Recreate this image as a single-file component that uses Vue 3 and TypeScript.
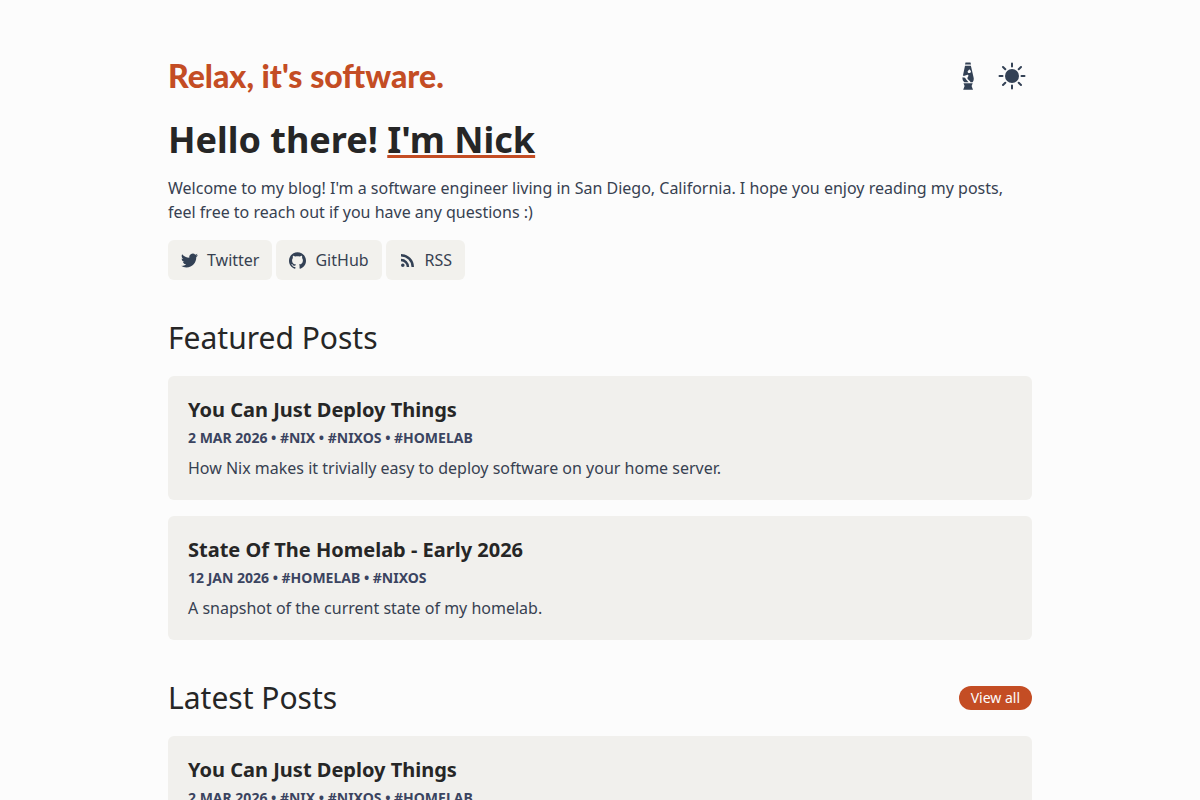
<script setup lang="ts">
interface Post {
  title: string
  date: string
  tags: string[]
  summary: string
}

const deploy: Post = {
  title: 'You Can Just Deploy Things',
  date: '2 Mar 2026',
  tags: ['#nix', '#nixos', '#homelab'],
  summary: 'How Nix makes it trivially easy to deploy software on your home server.',
}
const homelab: Post = {
  title: 'State Of The Homelab - Early 2026',
  date: '12 Jan 2026',
  tags: ['#homelab', '#nixos'],
  summary: 'A snapshot of the current state of my homelab.',
}

const sections: { heading: string; viewAll: boolean; posts: Post[] }[] = [
  { heading: 'Featured Posts', viewAll: false, posts: [deploy, homelab] },
  { heading: 'Latest Posts', viewAll: true, posts: [deploy] },
]

const meta = (post: Post) => [post.date, ...post.tags].join(' • ')

const links = [
  {
    label: 'Twitter',
    box: '0 0 24 24',
    path: 'M23.953 4.57a10 10 0 01-2.825.775 4.958 4.958 0 002.163-2.723c-.951.555-2.005.959-3.127 1.184a4.92 4.92 0 00-8.384 4.482C7.69 8.095 4.067 6.13 1.64 3.162a4.822 4.822 0 00-.666 2.475c0 1.71.87 3.213 2.188 4.096a4.904 4.904 0 01-2.228-.616v.06a4.923 4.923 0 003.946 4.827 4.996 4.996 0 01-2.212.085 4.936 4.936 0 004.604 3.417 9.867 9.867 0 01-6.102 2.105c-.39 0-.779-.023-1.17-.067a13.995 13.995 0 007.557 2.209c9.053 0 13.998-7.496 13.998-13.985 0-.21 0-.42-.015-.63A9.935 9.935 0 0024 4.59z',
  },
  {
    label: 'GitHub',
    box: '0 0 24 24',
    path: 'M12 .297c-6.63 0-12 5.373-12 12 0 5.303 3.438 9.8 8.205 11.385.6.113.82-.258.82-.577 0-.285-.01-1.04-.015-2.04-3.338.724-4.042-1.61-4.042-1.61C4.422 18.07 3.633 17.7 3.633 17.7c-1.087-.744.084-.729.084-.729 1.205.084 1.838 1.236 1.838 1.236 1.07 1.835 2.809 1.305 3.495.998.108-.776.417-1.305.76-1.605-2.665-.3-5.466-1.332-5.466-5.93 0-1.31.465-2.38 1.235-3.22-.135-.303-.54-1.523.105-3.176 0 0 1.005-.322 3.3 1.23.96-.267 1.98-.399 3-.405 1.02.006 2.04.138 3 .405 2.28-1.552 3.285-1.23 3.285-1.23.645 1.653.24 2.873.12 3.176.765.84 1.23 1.91 1.23 3.22 0 4.61-2.805 5.625-5.475 5.92.42.36.81 1.096.81 2.22 0 1.606-.015 2.896-.015 3.286 0 .315.21.69.825.57C20.565 22.092 24 17.592 24 12.297c0-6.627-5.373-12-12-12',
  },
  {
    label: 'RSS',
    box: '-1 -1 17 17',
    path: 'M1 1v2.500A10.500 10.500 0 0111.500 14H14A13 13 0 001 1zM1 5.800v2.500A5.700 5.700 0 016.700 14h2.500A8.200 8.200 0 001 5.800zM1 12.200a1.800 1.800 0 103.600 0 1.800 1.800 0 10-3.600 0z',
  },
]
</script>

<template>
  <div class="page">
    <header class="bar">
      <a class="brand" href="#">Relax, it's software.</a>
      <div class="tools">
        <button type="button" aria-label="Toggle lava lamp">
          <svg class="lamp" viewBox="0 0 14 28">
            <path d="M4.500.5h5L10 2.500H4z" />
            <path
              fill-rule="evenodd"
              d="M4 3.700h5.900L12.700 16c.2 1.500-.1 3-1.100 4.200H9.500C9 18.200 6.300 17.800 6.400 16c.1-1.500 1.500-1.700.9-2.800-.7-1.300-2.400.8-5.400.6zM8.200 7.200c-.3 1-2 1.700-1.500 3 .5 1.100 2.700 1.200 3.200-.1.400-1.100-.7-2.100-1.700-2.900z"
            />
            <path d="M1.500 15.200c1.200.4 2.600.2 3.100 1.200.6 1.300 1.700 2 3 3.800H3.400C2 19 1.200 17.500 1.500 15.200z" />
            <path d="M2.500 21.200h9.200L10.600 24l1.400 3.700H2.200L3.600 24z" />
          </svg>
        </button>
        <button type="button" aria-label="Toggle theme">
          <svg class="sun" viewBox="0 0 28 28">
            <circle cx="14" cy="14" r="7" />
            <path
              class="rays"
              d="M14 1.500v3M14 23.500v3M1.500 14h3M23.500 14h3M5 5l2.300 2.300M20.700 20.700l2.300 2.300M5 23l2.300-2.300M20.700 7.300l2.300-2.300"
            />
          </svg>
        </button>
      </div>
    </header>

    <main>
      <h1>Hello there! <a href="#">I'm Nick</a></h1>
      <p class="intro">
        Welcome to my blog! I'm a software engineer living in San Diego, California. I hope you
        enjoy reading my posts, feel free to reach out if you have any questions :)
      </p>
      <nav class="links" aria-label="Social links">
        <a v-for="link in links" :key="link.label" href="#">
          <svg :viewBox="link.box" aria-hidden="true"><path :d="link.path" /></svg>
          {{ link.label }}
        </a>
      </nav>

      <section v-for="section in sections" :key="section.heading">
        <div class="heading">
          <h2>{{ section.heading }}</h2>
          <a v-if="section.viewAll" class="pill" href="#">View all</a>
        </div>
        <div class="posts">
          <a v-for="post in section.posts" :key="post.title" class="card" href="#">
            <h3>{{ post.title }}</h3>
            <p class="meta">{{ meta(post) }}</p>
            <p class="summary">{{ post.summary }}</p>
          </a>
        </div>
      </section>
    </main>
  </div>
</template>

<style>
body {
  background: #fcfcfc;
}
</style>

<style scoped>
.page {
  box-sizing: border-box;
  max-width: 896px;
  margin: 0 auto;
  padding: 56px 16px;
  font: 16px/24px 'Noto Sans', sans-serif;
  color: #374151;
}
h1, h2, h3, p {
  margin: 0;
}
a {
  color: inherit;
  text-decoration: none;
}
.bar {
  display: flex;
  align-items: center;
  justify-content: space-between;
  height: 40px;
}
.brand {
  font: 900 32px/40px Lato, sans-serif;
  color: #c44d24;
}
.tools {
  display: flex;
  gap: 4px;
}
.tools button {
  display: flex;
  align-items: center;
  justify-content: center;
  width: 40px;
  height: 40px;
  padding: 0;
  border: 0;
  background: none;
  cursor: pointer;
}
svg {
  fill: #334155;
}
.lamp {
  width: 14px;
  height: 28px;
}
.sun {
  width: 28px;
  height: 28px;
}
.rays {
  stroke: #334155;
  stroke-width: 2;
  stroke-linecap: round;
}
h1 {
  margin-top: 24px;
  font-size: 36px;
  line-height: 40px;
  color: #262626;
}
h1 a {
  text-decoration: underline #c44d24 3px;
  text-decoration-skip-ink: none;
}
.intro {
  margin-top: 16px;
}
.links {
  display: flex;
  gap: 4px;
  margin-top: 16px;
}
.links a {
  display: flex;
  align-items: center;
  gap: 9px;
  padding: 8px 13px;
  border-radius: 6px;
  background: #f2f1ed;
}
.links svg {
  width: 17px;
  height: 17px;
}
.heading {
  display: flex;
  align-items: center;
  justify-content: space-between;
  margin: 40px 0 20px;
}
h2 {
  font-size: 30px;
  line-height: 36px;
  font-weight: 400;
  color: #262626;
}
.pill {
  padding: 2px 12px;
  border-radius: 12px;
  background: #c44d24;
  color: #fcfcfc;
  font-size: 14px;
  line-height: 20px;
}
.posts {
  display: grid;
  gap: 16px;
}
.card {
  padding: 20px;
  border-radius: 6px;
  background: #f1f0ed;
}
h3 {
  font-size: 20px;
  line-height: 28px;
  color: #262626;
}
.meta {
  margin: 4px 0 8px;
  font-size: 14px;
  line-height: 20px;
  font-weight: 700;
  text-transform: uppercase;
  color: #3b4460;
}
</style>
